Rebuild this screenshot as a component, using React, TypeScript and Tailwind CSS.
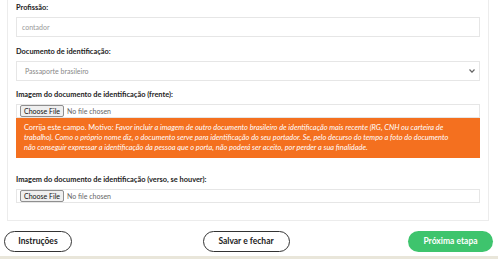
import React from "react";

const font = { fontFamily: "Lato, 'Open Sans', sans-serif" };

function Label({ children }: { children: React.ReactNode }) {
  return (
    <div className="h-[10px] text-[7.4px] leading-[10px] font-bold text-[#222] whitespace-nowrap">{children}</div>
  );
}

function FileInput() {
  return (
    <div className="h-[14px] border border-[#e6e6e6] bg-white flex items-center pl-[3px]">
      <button className="h-[12px] px-[3px] bg-[#efefef] border border-[#8f8f8f] rounded-[2px] text-[7px] leading-[10px] text-[#111]">
        Choose File
      </button>
      <span className="ml-[3px] text-[7px] text-[#666]">No file chosen</span>
    </div>
  );
}

export default function App() {
  return (
    <div className="w-[498px] h-[259px] overflow-hidden bg-white flex flex-col" style={font}>
      <div className="ml-[7px] w-[482px] border border-t-0 border-[#ececec] px-[8px] pt-[3px] pb-[17px]">
        <Label>Profissão:</Label>
        <div className="mt-[4px] h-[20px] border border-[#e6e6e6] flex items-center pl-[5px] text-[7px] text-[#999]">
          contador
        </div>
        <div className="mt-[10px]">
          <Label>Documento de identificação:</Label>
        </div>
        <div className="mt-[4px] h-[20px] border border-[#e6e6e6] flex items-center pl-[8px] pr-[3px] text-[7px] text-[#888]">
          <span className="flex-1">Passaporte brasileiro</span>
          <svg width="6" height="4" viewBox="0 0 6 4" className="mr-[1px]">
            <path d="M0.5 0.5 L3 3.2 L5.5 0.5" fill="none" stroke="#666" strokeWidth="1.2" />
          </svg>
        </div>
        <div className="mt-[9px]">
          <Label>Imagem do documento de identificação (frente):</Label>
        </div>
        <div className="mt-[4px]">
          <FileInput />
        </div>
        <div className="h-[40px] bg-[#f4701f] px-[8px] pt-[5px] text-[7.4px] leading-[10px] text-white whitespace-nowrap">
          <span className="not-italic">Corrija este campo. Motivo: </span>
          <i>
            Favor incluir a imagem de outro documento brasileiro de identificação mais recente (RG, CNH ou carteira de
            <br />
            trabalho). Como o próprio nome diz, o documento serve para identificação do seu portador. Se, pelo decurso do tempo a foto do documento
            <br />
            não conseguir expressar a identificação da pessoa que o porta, não poderá ser aceito, por perder a sua finalidade.
          </i>
        </div>
        <div className="mt-[17px]">
          <Label>Imagem do documento de identificação (verso, se houver):</Label>
        </div>
        <div className="mt-[4px]">
          <FileInput />
        </div>
      </div>
      <div className="flex items-center mt-[10px] pl-[4px] pr-[5px]">
        <button className="w-[68px] h-[21px] rounded-full border border-[#333] bg-white text-[8.5px] font-bold text-[#222]">
          Instruções
        </button>
        <div className="flex-1 flex justify-center pl-[12px]">
          <button className="w-[87px] h-[21px] rounded-full border border-[#333] bg-white text-[8.5px] font-bold text-[#222]">
            Salvar e fechar
          </button>
        </div>
        <button className="w-[85px] h-[21px] rounded-full bg-[#3ec46d] text-[8.5px] font-bold text-white">
          Próxima etapa
        </button>
      </div>
      <div className="mt-auto h-[3px] bg-[#e9e6da]" />
    </div>
  );
}
